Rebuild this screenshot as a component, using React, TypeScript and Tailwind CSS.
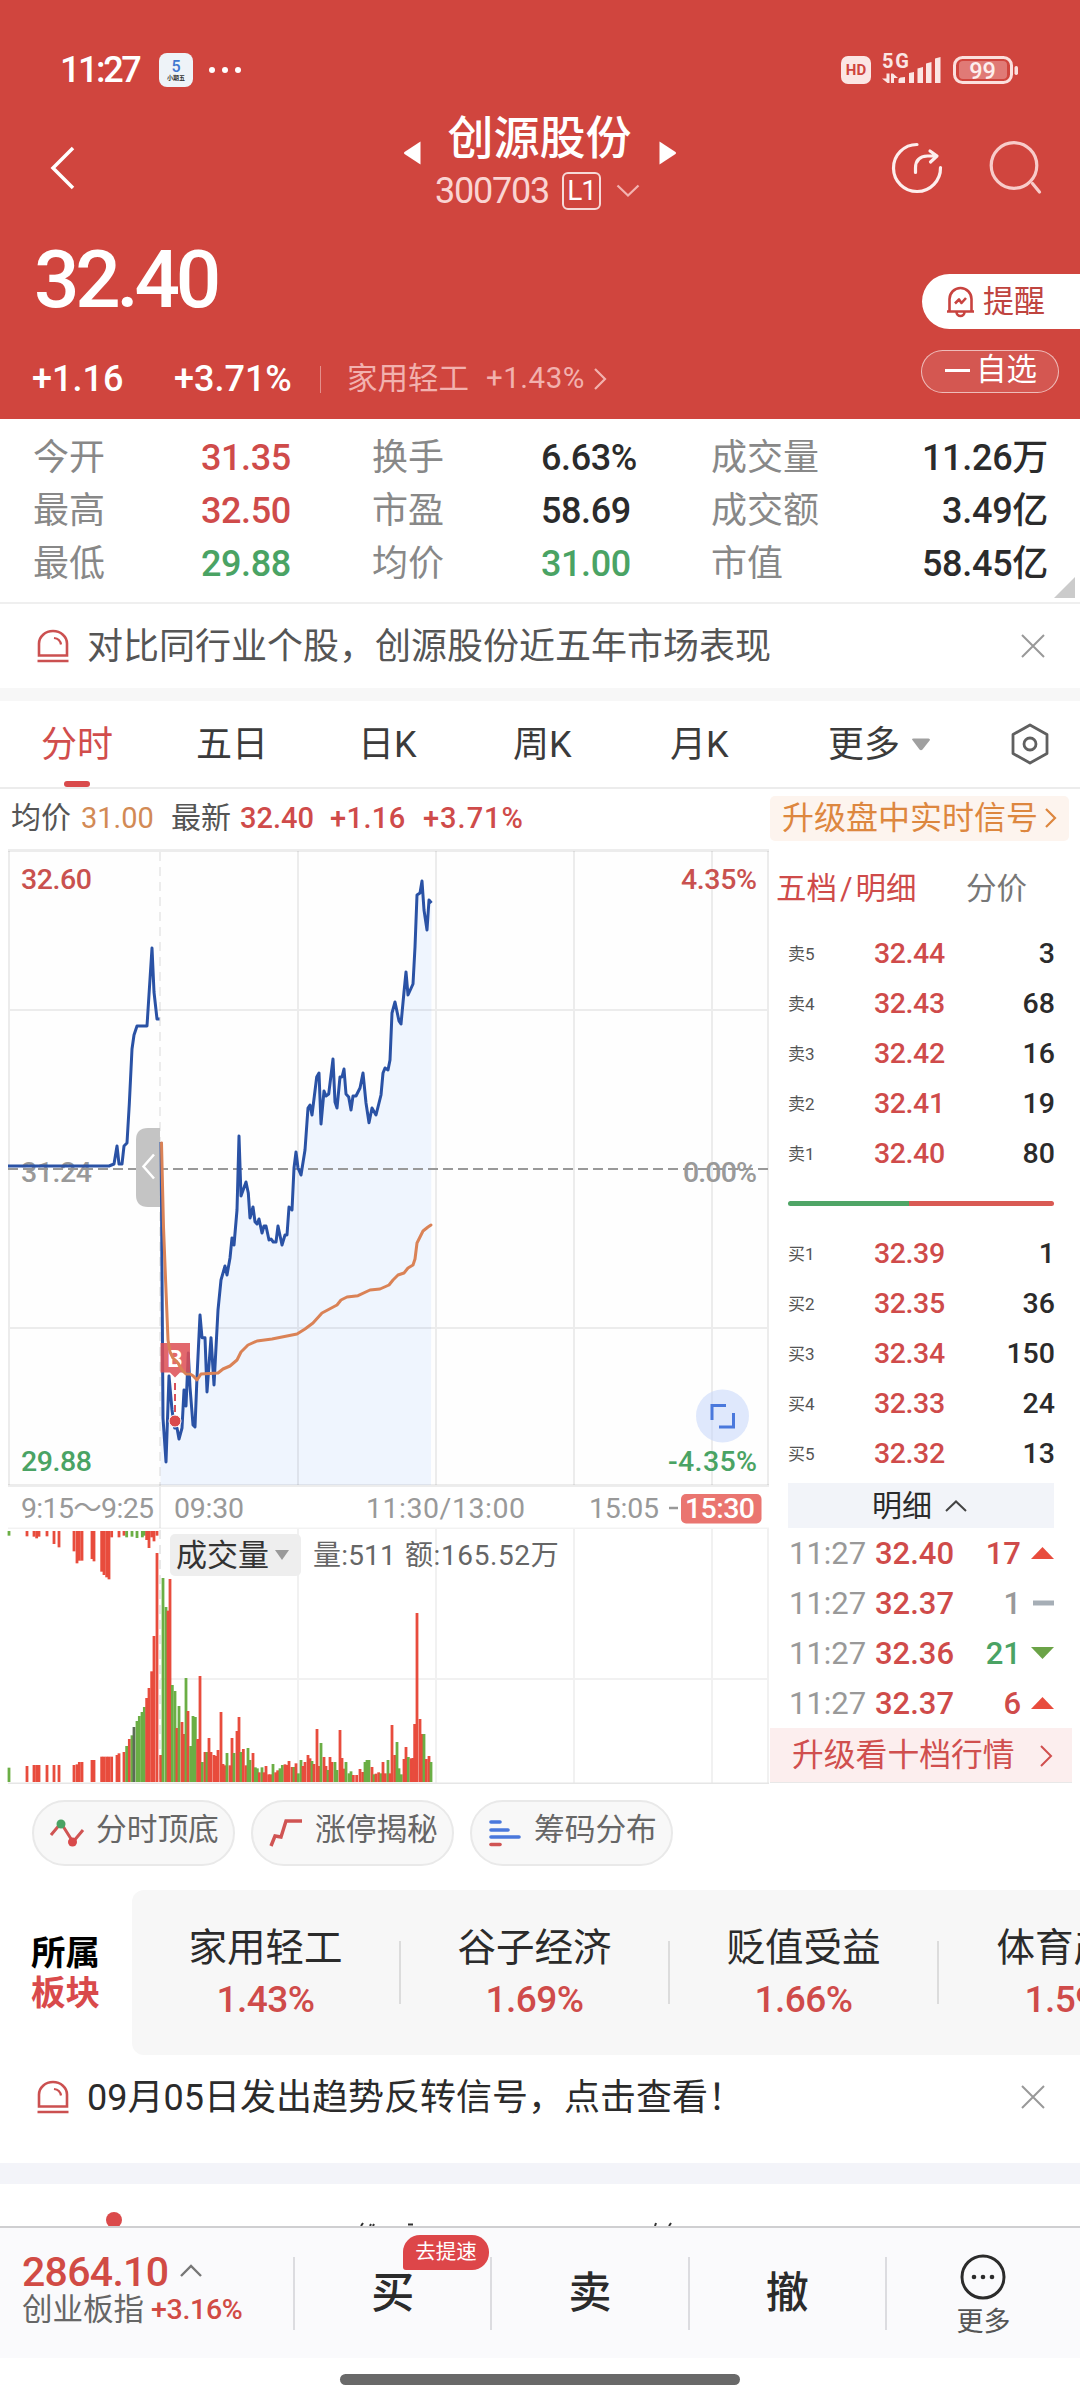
import type { ReactNode } from 'react';

type Tone = 'up' | 'down' | 'flat';

const toneClass: Record<Tone, string> = {
  up: 'text-[#cf4b4a]',
  down: 'text-[#4aa364]',
  flat: 'text-[#999999]',
};

const stats: { label: string; value: string; color: string }[][] = [
  [
    { label: '今开', value: '31.35', color: 'text-[#cf4b4a]' },
    { label: '换手', value: '6.63%', color: 'text-[#2b2b2b]' },
    { label: '成交量', value: '11.26万', color: 'text-[#2b2b2b]' },
  ],
  [
    { label: '最高', value: '32.50', color: 'text-[#cf4b4a]' },
    { label: '市盈', value: '58.69', color: 'text-[#2b2b2b]' },
    { label: '成交额', value: '3.49亿', color: 'text-[#2b2b2b]' },
  ],
  [
    { label: '最低', value: '29.88', color: 'text-[#4aa364]' },
    { label: '均价', value: '31.00', color: 'text-[#4aa364]' },
    { label: '市值', value: '58.45亿', color: 'text-[#2b2b2b]' },
  ],
];

const asks = [
  ['卖5', '32.44', '3'],
  ['卖4', '32.43', '68'],
  ['卖3', '32.42', '16'],
  ['卖2', '32.41', '19'],
  ['卖1', '32.40', '80'],
];

const bids = [
  ['买1', '32.39', '1'],
  ['买2', '32.35', '36'],
  ['买3', '32.34', '150'],
  ['买4', '32.33', '24'],
  ['买5', '32.32', '13'],
];

const ticks: { price: string; volume: string; tone: Tone }[] = [
  { price: '32.40', volume: '17', tone: 'up' },
  { price: '32.37', volume: '1', tone: 'flat' },
  { price: '32.36', volume: '21', tone: 'down' },
  { price: '32.37', volume: '6', tone: 'up' },
];

const sectors = [
  ['家用轻工', '1.43%'],
  ['谷子经济', '1.69%'],
  ['贬值受益', '1.66%'],
  ['体育产业', '1.59%'],
];

const preOpenLine =
  '8,1166 109,1166 114,1164 117,1146 119,1164 122,1164 124,1146 127,1143 129.3,1104 132,1049 134,1035 137,1026 147,1026 149.3,990 152,948 154,992 157,1019 159.5,1019';

const priceLine =
  '161,1142 161.5,1200 163,1418 166,1462 169,1376 172,1410 174.7,1428 177,1428 179,1439 182,1428 184,1390 186,1406 188.3,1353 190,1387 193,1425 195,1427 197,1377 200,1315 202,1337.7 205,1337.7 207,1392 211,1337.7 214,1385 218,1310 221,1280 225,1266 227,1275 230,1258 232,1238 234,1245 237,1210 239,1136 241,1196 246,1182 248.3,1193 250,1218 253,1207 255,1221.7 257,1224 259,1219 262,1233 264,1226 266,1226 269,1240 271,1239 273.3,1242 276,1242 278,1226 282,1245 285,1235 287,1235 289,1207 292,1210 294,1168 296,1152 298,1168 301,1175 305,1150 308,1108 310,1105 312,1115 316.7,1077 319,1073 321,1124 324,1091 326,1096 328.7,1094 333,1059 335,1102 337,1108 340,1077 342,1077 344,1069 346,1094 348.7,1097 351,1110 353,1096 356,1096 360,1088 363,1073 366,1103 369,1122.7 372,1108 376,1115 381,1095 383,1073 385,1068 388,1070 390,1060 392,1013 395,1002 399,1021 401,1024 404,992 406,972 408,995 413,984 415,947 417,895 420,893 422,881 424,910 427,930 429,900 431.5,903';

const averageLine =
  '161.5,1143 163.5,1227 165.7,1283 168,1340 170,1352 173,1358 178,1363 182,1370 186,1374 190,1374 193,1375.7 197,1380 201,1374 218,1373 223,1369 230,1366 237,1360 241,1352 248,1345 257,1341 272,1339 297,1334 305,1329 313,1323 322,1313 337,1305 341,1300 347,1297 358,1295.7 370,1290 380,1289 389,1285 393,1280 398,1275 404,1273 408,1268 413,1265 415,1259 417,1243 423,1231 428,1227 431,1225';

// x (in thirds of a pixel), height, colour: r rise, g fall, k unchanged
const auctionBars =
  '27,14,g 81,16,r 102,17,r 110,22,r 117,17,r 141,16,r 162,39,r 177,49,r 222,61,r 231,97,r 238,89,r 246,89,r 276,84,r 282,91,r 305,122,r 312,132,r 320,139,r 327,145,r 335,19,r 357,19,r 372,14,r 380,19,g 396,17,g 411,21,g 427,19,g 433,14,g 440,27,r 447,51,r 455,19,r 462,31,r 471,14,r';

const volumeBars =
  '27,773,g 81,768,r 102,765,r 110,765,r 117,765,r 141,765,r 162,765,r 177,765,r 222,765,r 231,763,r 238,756,r 246,756,r 276,750,r 282,750,r 305,740,r 312,740,r 320,740,r 327,740,r 335,740,r 351,735,r 357,730,r 372,726,r 380,708,g 388,687,r 396,676,g 402,651,k 411,633,g 418,618,g 426,606,g 433,591,g 440,564,r 447,534,r 455,484,r 462,378,r 471,129,r 482,735,r 489,204,g 498,291,g 504,302,r 510,207,r 517,525,g 525,543,g 531,654,r 537,588,g 546,636,r 552,672,r 558,504,g 564,603,r 572,708,g 579,618,g 586,621,g 593,687,r 600,498,r 607,756,g 615,726,r 621,726,g 627,684,r 633,726,r 642,735,r 648,738,r 654,720,r 663,606,r 669,762,r 675,766,r 681,729,g 690,766,r 696,684,r 702,729,g 711,663,r 717,621,r 723,726,g 730,717,r 738,766,r 744,714,g 750,750,g 759,729,r 766,772,g 772,775,g 778,787,r 786,772,g 792,787,r 798,768,r 806,793,r 812,793,r 819,762,g 827,787,r 833,781,r 840,775,g 847,765,g 855,763,r 861,765,r 867,753,r 876,771,r 882,771,g 888,760,r 895,790,g 903,750,g 909,768,r 915,756,r 924,735,r 930,745,r 936,753,g 942,762,r 951,657,r 957,768,r 963,699,g 972,741,r 978,768,r 984,780,g 990,741,r 996,756,r 1005,756,g 1011,780,g 1020,660,r 1026,744,r 1032,776,r 1038,756,g 1047,790,g 1053,784,g 1060,795,r 1070,795,r 1080,777,r 1088,786,r 1095,756,g 1101,750,g 1107,750,g 1116,771,r 1122,793,g 1128,791,r 1136,787,r 1143,790,g 1149,756,r 1156,790,r 1164,750,g 1170,790,r 1176,645,r 1184,735,r 1191,696,g 1197,775,g 1204,793,g 1212,747,r 1218,711,r 1225,741,g 1233,745,r 1239,744,r 1244,642,r 1251,309,r 1260,627,r 1266,672,r 1272,672,g 1279,747,r 1287,738,r 1293,756,g';

const barColor: Record<string, string> = { r: '#e84c3d', g: '#6bae45', k: '#5d6b57' };

const parseBars = (source: string) =>
  source.split(' ').map((item) => {
    const [x, y, kind] = item.split(',');
    return { x: Number(x) / 3, y: Number(y), color: barColor[kind] };
  });

const StatusBar = () => (
  <div className="flex h-[100px] items-center pt-[40px] pl-[60px] text-white">
    <span className="w-[99px] text-[36px] font-medium tracking-[-2.4px]">11:27</span>
    <div className="flex h-[34px] w-[34px] flex-col items-center rounded-[8px] bg-[#eef3f8] pt-[6px]">
      <span className="text-[16px] font-medium text-[#3f78d0]">5</span>
      <span className="text-[6px] font-bold text-[#333]">小期五</span>
    </div>
    <div className="ml-[16px] flex gap-[7px]">
      <i className="h-[6px] w-[6px] rounded-full bg-white" />
      <i className="h-[6px] w-[6px] rounded-full bg-white" />
      <i className="h-[6px] w-[6px] rounded-full bg-white" />
    </div>
    <div className="ml-auto flex items-center pr-[61px]">
      <span className="flex h-[28px] w-[30px] items-center justify-center rounded-[7px] bg-[#fbe6e4] text-[15px] font-bold text-[#cf453e]">HD</span>
      <svg className="ml-[11px] overflow-visible" width="60" height="34" viewBox="0 0 60 34" fill="#fbe6e4">
        <text x="0" y="15" fontSize="20" fontWeight="700" textLength="27">5G</text>
        <path d="M4.500 20.500h3V30h-2L0 25.500h4.500zM9 20.500h2l5 4.500h-4v5H9zM16.500 30v-3q0-2 2-2.500l4.500-.5v6zM27 20l5-1v11h-5zM35.500 15.500l5.500-1.500v16h-5.500zM44 10.500L49.500 9v21H44zM53 5.500L58.500 4v26H53z" />
      </svg>
      <svg className="ml-[11px]" width="66" height="28" viewBox="0 0 66 28">
        <rect x="1.500" y="1.500" width="57" height="25" rx="8" fill="none" stroke="#fbe0de" strokeWidth="3" />
        <rect x="6" y="5" width="48" height="18" rx="4" fill="#e07a76" />
        <rect x="61.500" y="10" width="3.500" height="9" rx="1.700" fill="#fbe0de" />
        <text x="29.500" y="22.500" fontSize="23.500" fontWeight="500" fill="#fdeeed" textAnchor="middle">99</text>
      </svg>
    </div>
  </div>
);

const TitleBar = () => (
  <div className="flex h-[120px] text-white">
    <svg className="mt-[45px] ml-[49px]" width="28" height="46" viewBox="0 0 28 46">
      <path d="M24 3L4 23l20 20" fill="none" stroke="#fff" strokeWidth="3.500" />
    </svg>
    <svg className="mt-[41px] ml-[327px]" width="17" height="24" viewBox="0 0 17 24">
      <path d="M16.500 .5v23L.5 13q-1-1 0-2z" fill="#fff" />
    </svg>
    <div className="ml-[13px] flex w-[224px] flex-col items-center pt-[15px] pr-[13px]">
      <h1 className="text-[46px] font-medium">创源股份</h1>
      <div className="mt-[11px] -ml-[4px] flex items-center">
        <span className="text-[36px] tracking-[-1.2px] text-[#fad4d2]">300703</span>
        <span className="ml-[13px] flex h-[38px] w-[39px] items-center justify-center rounded-[6px] border-2 border-white/80 text-[28px] tracking-[-1px]">L1</span>
        <svg className="ml-[15px]" width="24" height="14" viewBox="0 0 24 14">
          <path d="M1.500 1.500l10.500 10 10.500-10" fill="none" stroke="#f3b3b0" strokeWidth="2.200" />
        </svg>
      </div>
    </div>
    <svg className="mt-[41px] ml-[1px]" width="17" height="24" viewBox="0 0 17 24">
      <path d="M.5 .5v23L16.500 13q1-1 0-2z" fill="#fff" />
    </svg>
    <svg className="mt-[40px] ml-[213px]" width="56" height="56" viewBox="0 0 56 56" fill="none" stroke="#fdeeed" strokeWidth="3.200" strokeLinecap="round" strokeLinejoin="round">
      <path d="M28 4.500A23.500 23.500 0 1 0 51.500 27.500" />
      <path d="M26.500 32.500v-4.500q0-11.500 12-12h8.500M41 11l7 5-6.500 6" />
    </svg>
    <svg className="mt-[39px] ml-[44px]" width="56" height="58" viewBox="0 0 56 58" fill="none" stroke="#f8ccca" strokeWidth="3.200" strokeLinecap="round">
      <circle cx="25" cy="26.500" r="22.800" />
      <path d="M43.500 44.500l7 8.500" />
    </svg>
  </div>
);

const Quote = () => (
  <div className="flex h-[199px] justify-between pl-[32px] text-white">
    <div className="pt-[20px]">
      <p className="pl-[2px] text-[80px] font-medium tracking-[-4.2px]">32.40</p>
      <div className="mt-[41px] flex items-center text-[36px] font-medium">
        <span className="w-[142px]">+1.16</span>
        <span className="w-[146px]">+3.71%</span>
        <i className="h-[27px] w-px bg-white/40" />
        <span className="ml-[26px] text-[30.500px] font-normal text-[#f2b1ae]">家用轻工</span>
        <span className="ml-[17px] text-[29.500px] font-normal tracking-[0.5px] text-[#f2b1ae]">+1.43%</span>
        <svg className="ml-[8px]" width="14" height="22" viewBox="0 0 14 22">
          <path d="M2 1l10 10L2 21" fill="none" stroke="#f2b1ae" strokeWidth="2.200" />
        </svg>
      </div>
    </div>
    <div className="flex flex-col items-end pt-[54px]">
      <div className="flex h-[55px] w-[158px] items-center rounded-l-full bg-white pl-[24px] text-[31px] text-[#bf443f]">
        <svg className="mr-[8px]" width="29" height="33" viewBox="0 0 29 33" fill="none" stroke="#c8433f" strokeWidth="2.600" strokeLinejoin="round">
          <path d="M3.500 26V14a11 11 0 0 1 22 0v12M1 26.500h27M10.500 27a4 4 0 0 0 8 0" />
          <path d="M9 18.500l4-4 2.500 3.500 4.500-5" />
        </svg>
        提醒
      </div>
      <div className="mt-[21px] mr-[21px] flex h-[43px] w-[138px] items-center rounded-full border border-white/60 bg-white/10 pb-[2px] pl-[23px] text-[30.500px]">
        <i className="mr-[6px] h-[3px] w-[25px] bg-white" />
        自选
      </div>
    </div>
  </div>
);

const Stats = () => (
  <section className="relative h-[185px] border-b-2 border-[#efefef] pt-[12px]">
    {stats.map((row) => (
      <div key={row[0].label} className="grid h-[53px] grid-cols-[168px_171px_169px_170px_130px_1fr] items-center pr-[32px] pl-[33px] text-[36px]">
        {row.map((cell, index) => (
          <div key={cell.label} className="contents">
            <span className="text-[#888888]">{cell.label}</span>
            <span className={`font-medium ${cell.color} ${index === 2 ? 'text-right tracking-[-0.3px]' : 'tracking-[-0.4px]'}`}>{cell.value}</span>
          </div>
        ))}
      </div>
    ))}
    <svg className="absolute right-[5px] bottom-[4px]" width="21" height="21" viewBox="0 0 21 21">
      <path d="M21 0v21H0z" fill="#cbcbcb" />
    </svg>
  </section>
);

const Notice = ({ children, className }: { children: ReactNode; className: string }) => (
  <div className={`flex items-center pr-[34px] pl-[36px] text-[36px] ${className}`}>
    <svg width="34" height="34" viewBox="0 0 34 34" fill="none" stroke="#cb5050" strokeWidth="2.600">
      <path d="M3 26.500V14.500a14 12.500 0 0 1 28 0v12zM1.500 32h31" />
      <path d="M18 9c4 .5 6.500 3 7 6.500" strokeWidth="2.200" />
    </svg>
    <span className="mt-[2px] ml-[17px] whitespace-nowrap">{children}</span>
    <svg className="ml-auto" width="26" height="26" viewBox="0 0 26 26">
      <path d="M2 2l22 22M24 2L2 24" stroke="#999" strokeWidth="2" />
    </svg>
  </div>
);

const Periods = () => (
  <nav className="flex h-[88px] items-center border-b-2 border-[#ececec] pl-[41px] text-[36px] text-[#3b3b3b]">
    <span className="relative flex h-full w-[155px] items-center pt-[1px] text-[#d14d4c]">
      分时
      <i className="absolute bottom-0 left-[23px] h-[6px] w-[26px] rounded-[3px] bg-[#d94a4b]" />
    </span>
    <span className="w-[162px] pt-[1px]">五日</span>
    <span className="w-[155px] pt-[1px]">日K</span>
    <span className="w-[157px] pt-[1px]">周K</span>
    <span className="w-[158px] pt-[1px]">月K</span>
    <span className="pt-[1px]">更多</span>
    <svg className="ml-[11px]" width="20" height="13" viewBox="0 0 20 13">
      <path d="M1 1.500q0-1 1.500-1h15q1.500 0 1.500 1.500L11.500 11.500q-1.500 1.500-3 0z" fill="#a0a0a0" />
    </svg>
    <svg className="ml-[79px]" width="40" height="42" viewBox="0 0 40 42" fill="none" stroke="#606060" strokeWidth="2.800" strokeLinejoin="round">
      <path d="M20 2l17 9.500v19L20 40 3 30.500v-19z" />
      <circle cx="20" cy="21" r="6" />
    </svg>
  </nav>
);

const Legend = () => (
  <div className="flex h-[60px] items-center pr-[11px] pb-[2px] pl-[11px] text-[29px] text-[#555]">
    <span className="text-[30px]">均价</span>
    <span className="ml-[10px] w-[90px] text-[#d28a55]">31.00</span>
    <span className="text-[30px]">最新</span>
    <span className="ml-[9px] w-[90px] font-medium text-[#cf4b4a]">32.40</span>
    <span className="w-[93px] font-medium tracking-[0.4px] text-[#cf4b4a]">+1.16</span>
    <span className="font-medium tracking-[1px] text-[#cf4b4a]">+3.71%</span>
    <span className="ml-auto flex h-[45px] w-[299px] items-center rounded-[5px] bg-[#fdf4ee] pl-[12px] text-[32px] text-[#dd873f]">
      升级盘中实时信号
      <svg className="ml-[6px]" width="13" height="20" viewBox="0 0 13 20">
        <path d="M2 1l9 9-9 9" fill="none" stroke="#dd873f" strokeWidth="2.200" />
      </svg>
    </span>
  </div>
);

const PriceChart = () => (
  <svg className="block" width="769" height="680" viewBox="0 849 769 680" fontSize="28.500">
    <rect x="8" y="850" width="761" height="636" fill="#fefefe" />
    <polygon points={`160.500,1485 ${priceLine} 431,1485`} fill="#eff5fe" />
    <g stroke="#000" strokeOpacity=".07" strokeWidth="2">
      <path d="M9 851v634M298 851v634M436 851v634M574 851v634M712 851v634M768 851v634M9 1010h760M9 1328h760M160 1487v41" fill="none" />
      <path d="M8 850.500h761M8 1485.500h761" strokeWidth="3" />
      <path d="M160 852v634" strokeDasharray="9 6" />
      <path d="M8 1528.500h761" strokeOpacity=".05" />
    </g>
    <path d="M8 1169h761" stroke="#999" strokeWidth="2" strokeDasharray="10 5" />
    <g fontWeight="500">
      <text x="21" y="889" fill="#c9514f" textLength="71">32.60</text>
      <text x="21" y="1182" fill="#999" textLength="71">31.24</text>
      <text x="21" y="1471" fill="#4aa364" textLength="71">29.88</text>
      <text x="681" y="889" fill="#c9514f" textLength="76">4.35%</text>
      <text x="683" y="1182" fill="#999" textLength="74">0.00%</text>
      <text x="668" y="1471" fill="#4aa364" textLength="89">-4.35%</text>
    </g>
    <g fill="#999">
      <text x="21" y="1517.500" textLength="133">9:15～9:25</text>
      <text x="174" y="1517.500" textLength="70">09:30</text>
      <text x="366" y="1517.500" textLength="159">11:30/13:00</text>
      <text x="589" y="1517.500" textLength="70">15:05</text>
      <path d="M669 1508h9" stroke="#999" strokeWidth="2.500" />
    </g>
    <rect x="681" y="1494" width="80.500" height="29.500" rx="5" fill="#ea7570" />
    <text x="685" y="1517.500" fill="#fff" fontWeight="500" textLength="70">15:30</text>

    <path d="M160 1128v79h-12q-12 0-12-12v-55q0-12 12-12z" fill="#c4c4c4" />
    <path d="M154 1154.500l-10.500 12 10.500 12" fill="none" stroke="#fff" strokeWidth="2.500" />

    <g fill="none" stroke="#2a52a5" strokeWidth="3" strokeLinejoin="round">
      <polyline points={preOpenLine} />
      <polyline points={priceLine} />
    </g>

    <path d="M160.500 1343h29.500v29.500h-10l-5 5-5-5h-9.500z" fill="#dd4f55" fillOpacity=".86" />
    <text x="175" y="1366.500" fontSize="24" fontWeight="700" fill="#fff" textAnchor="middle">B</text>
    <path d="M175 1383v32" stroke="#d9505a" strokeWidth="2" strokeDasharray="7 4" />
    <circle cx="175" cy="1421" r="6" fill="#db4a4b" stroke="#fff" strokeWidth="1" />
    <polyline points={averageLine} fill="none" stroke="#da8256" strokeWidth="3" strokeLinejoin="round" strokeLinecap="round" />

    <circle cx="722.500" cy="1416" r="26.500" fill="#c9d8fa" fillOpacity=".6" />
    <path d="M712 1420v-14.500h14M733.500 1413v14h-14.500" fill="none" stroke="#4a78dc" strokeWidth="3" />
  </svg>
);

const VolumeChart = () => (
  <div className="relative">
    <svg className="block" width="769" height="255" viewBox="0 1529 769 255">
      <path d="M160 1530v253" stroke="#e8e8e8" strokeWidth="2" strokeDasharray="9 6" />
      <path d="M298 1529v254M436 1529v254M574 1529v254M712 1529v254M768 1529v254M160 1679h609" stroke="#f1f1f1" strokeWidth="2" />
      {parseBars(auctionBars).map((bar) => (
        <rect key={bar.x} x={bar.x - 1.4} y="1531" width="2.800" height={bar.y / 3} fill={bar.color} />
      ))}
      {parseBars(volumeBars).map((bar) => (
        <rect key={bar.x} x={bar.x - 1.4} y={1510 + bar.y / 3} width="2.800" height={272 - bar.y / 3} fill={bar.color} />
      ))}
      <path d="M8 1783.200h761" stroke="#e6e6e6" strokeWidth="1.500" />
    </svg>
    <div className="absolute top-[5px] left-[170px] flex items-center">
      <span className="flex h-[42px] w-[131px] items-center rounded-[5px] bg-[#eeeeee] pl-[6px] text-[31px] text-[#333]">
        成交量
        <svg className="ml-[6px]" width="14" height="10" viewBox="0 0 14 10">
          <path d="M0 0h14L7 10z" fill="#999" />
        </svg>
      </span>
      <span className="mt-[2px] ml-[12px] text-[28px] tracking-[0.2px] text-[#666]">量:511</span>
      <span className="mt-[2px] ml-[9px] text-[28px] tracking-[0.6px] text-[#666]">额:165.52万</span>
    </div>
  </div>
);

const LevelRow = ({ level }: { level: string[] }) => (
  <div className="flex h-[50px] items-center pt-px pr-[17px] pl-[19px] text-[28.500px] font-medium">
    <span className="w-[86px] text-[17px] font-normal text-[#555]">{level[0]}</span>
    <span className="tracking-[-0.4px] text-[#cf4b4a]">{level[1]}</span>
    <span className="ml-auto text-[#2b2b2b]">{level[2]}</span>
  </div>
);

const TickMark = ({ tone }: { tone: Tone }) => (
  <svg className="ml-[10px]" width="23" height="12" viewBox="0 0 23 12">
    {tone === 'up' && <path d="M0 12L11.500 0 23 12z" fill="#e84c3d" />}
    {tone === 'down' && <path d="M0 0h23L11.500 12z" fill="#6ba347" />}
    {tone === 'flat' && <path d="M2 3.500h21v5H2z" fill="#a6aeb6" />}
  </svg>
);

const OrderBook = () => (
  <aside className="w-[303px]">
    <div className="flex h-[80px] items-center pl-[7px] text-[30.500px] text-[#cf4b4a]">
      <span className="w-[190px]">五档<span className="mx-[3px]">/</span>明细</span>
      <span className="text-[#777]">分价</span>
    </div>
    {asks.map((level) => (
      <LevelRow key={level[0]} level={level} />
    ))}
    <div className="flex h-[50px] items-center pr-[18px] pb-[2px] pl-[19px]">
      <i className="h-[5px] w-[121px] rounded-l-full bg-[#4fa566]" />
      <i className="h-[5px] flex-1 rounded-r-full bg-[#d95a54]" />
    </div>
    {bids.map((level) => (
      <LevelRow key={level[0]} level={level} />
    ))}
    <div className="mt-[4px] mr-[18px] ml-[19px] flex h-[45px] items-center justify-center gap-[13px] bg-[#f2f4f9] pr-[3px] text-[30px] text-[#2b2b2b]">
      明细
      <svg width="22" height="12" viewBox="0 0 22 12">
        <path d="M1 11L11 1.500 21 11" fill="none" stroke="#444" strokeWidth="2" />
      </svg>
    </div>
    {ticks.map((tick, index) => (
      <div key={index} className="flex h-[50px] items-center pr-[18px] pl-[20px] text-[31px]">
        <span className="w-[86px] text-[#999]">11:27</span>
        <span className="font-medium text-[#cf4b4a]">{tick.price}</span>
        <span className={`ml-auto font-medium ${toneClass[tick.tone]}`}>{tick.volume}</span>
        <TickMark tone={tick.tone} />
      </div>
    ))}
    <div className="ml-px flex h-[55px] items-center justify-between border-b border-[#e8e8e8] bg-[#fceeee] pt-px pr-[19px] pl-[22px] text-[31.800px] text-[#d04f4e]">
      升级看十档行情
      <svg width="14" height="22" viewBox="0 0 14 22">
        <path d="M2 1l10 10L2 21" fill="none" stroke="#d04f4e" strokeWidth="2" />
      </svg>
    </div>
  </aside>
);

const Chip = ({ icon, label }: { icon: ReactNode; label: string }) => (
  <span className="flex h-[66px] w-[203px] items-center gap-[11px] rounded-full border-2 border-[#e9e9e9] bg-[#f8f8f8] pb-[6px] pl-[15px] text-[30.700px] whitespace-nowrap text-[#666]">
    {icon}
    {label}
  </span>
);

const Chips = () => (
  <div className="flex gap-[16px] pt-[16px] pl-[32px]">
    <Chip
      label="分时顶底"
      icon={
        <svg className="mt-[5px] shrink-0" width="36" height="30" viewBox="0 0 36 30" fill="none" strokeWidth="3">
          <path d="M2 17L12 5l12 19 10-12" stroke="#d05453" />
          <circle cx="12" cy="6" r="4.500" fill="#4aa364" />
          <circle cx="23.500" cy="24" r="4.500" fill="#d94a4b" />
        </svg>
      }
    />
    <Chip
      label="涨停揭秘"
      icon={
        <svg className="mt-[5px] shrink-0" width="36" height="30" viewBox="0 0 36 30">
          <path d="M3 28l4-10 6 1 5-16h16" fill="none" stroke="#d05453" strokeWidth="3.400" />
        </svg>
      }
    />
    <Chip
      label="筹码分布"
      icon={
        <svg className="mt-[5px] shrink-0" width="36" height="30" viewBox="0 0 36 30" strokeWidth="3.600" strokeLinecap="round">
          <path d="M4 4h9M4 12h17M4 19h28" stroke="#4a78dc" />
          <path d="M4 26.500h9" stroke="#d05453" />
        </svg>
      }
    />
  </div>
);

const Sectors = () => (
  <section className="mt-[24px] flex items-center overflow-hidden">
    <div className="w-[132px] shrink-0 pt-[2px] pl-[31px] text-[34.500px] font-bold">
      <p className="h-[40px] text-black">所属</p>
      <p className="h-[36px] text-[#d94a4b]">板块</p>
    </div>
    <div className="flex h-[165px] shrink-0 items-center rounded-l-[12px] bg-[#f7f7f7]">
      {sectors.map(([name, change], index) => (
        <div key={name} className={`flex h-[63px] w-[269px] flex-col items-center justify-center gap-[13px] pt-[2px] ${index < 3 ? 'border-r-2 border-[#dcdcdc]' : ''}`}>
          <span className="text-[38.500px] text-[#2b2b2b]">{name}</span>
          <span className="text-[37px] font-medium tracking-[-0.5px] text-[#cf4b4a]">{change}</span>
        </div>
      ))}
    </div>
  </section>
);

// tops of the next section's tabs, cut off by the trade bar
const NextTabs = () => (
  <div className="h-[42px]">
    <svg className="block" width="1080" height="42" viewBox="0 0 1080 42">
      <circle cx="114" cy="36" r="8" fill="#db4a4b" />
      <path d="M361 42l2-3M370 42l1-2M373 42l1-2M408 40.500h5M655 42l1-3M669 42l2-3" stroke="#333" strokeWidth="2" />
    </svg>
  </div>
);

const TradeBar = () => (
  <footer className="flex h-[132px] items-center border-t-2 border-[#cfcfd1] bg-[#fafafc] text-[#2b2b2b]">
    <div className="w-[293px] shrink-0 pb-[9px] pl-[22px]">
      <div className="flex items-center">
        <span className="text-[41px] font-medium tracking-[-0.7px] text-[#d14b45]">2864.10</span>
        <svg className="mb-[4px] ml-[12px]" width="22" height="13" viewBox="0 0 22 13">
          <path d="M1 12L11 2l10 10" fill="none" stroke="#777" strokeWidth="2.400" />
        </svg>
      </div>
      <div className="mt-[2px] flex items-center text-[30.500px] text-[#666]">
        创业板指
        <span className="ml-[7px] text-[28.500px] font-medium tracking-[-0.3px] text-[#d14b45]">+3.16%</span>
      </div>
    </div>
    {['买', '卖', '撤'].map((action) => (
      <button key={action} type="button" className="relative h-[73px] w-[197.300px] shrink-0 border-l-2 border-[#dcdce0] text-[43px] font-medium">
        {action}
        {action === '买' && (
          <span className="absolute -top-[22px] left-[108px] flex h-[35px] w-[86px] items-center justify-center rounded-[17px] rounded-bl-[3px] bg-[#dd4649] text-[20.500px] font-normal text-white">去提速</span>
        )}
      </button>
    ))}
    <div className="flex h-[73px] flex-1 flex-col items-center justify-center gap-[9px] border-l-2 border-[#dcdce0] pt-[3px] text-[27px] text-[#555]">
      <svg className="shrink-0" width="46" height="46" viewBox="0 0 46 46">
        <circle cx="23" cy="23" r="21" fill="none" stroke="#2b2b2b" strokeWidth="3" />
        <g fill="#2b2b2b">
          <circle cx="14" cy="23" r="2.300" />
          <circle cx="23" cy="23" r="2.300" />
          <circle cx="32" cy="23" r="2.300" />
        </g>
      </svg>
      <span>更多</span>
    </div>
  </footer>
);

export default function App() {
  return (
    <div className="h-[2400px] w-[1080px] overflow-hidden bg-white font-['Roboto','Noto_Sans_CJK_SC',sans-serif] leading-none">
      <header className="h-[419px] bg-[#d0453e]">
        <StatusBar />
        <TitleBar />
        <Quote />
      </header>
      <Stats />
      <Notice className="h-[84px] text-[#555]">对比同行业个股，创源股份近五年市场表现</Notice>
      <div className="h-[13px] bg-[#f7f7f7]" />
      <Periods />
      <Legend />
      <main className="flex">
        <div className="w-[769px]">
          <PriceChart />
          <VolumeChart />
        </div>
        <OrderBook />
      </main>
      <Chips />
      <Sectors />
      <Notice className="h-[108px] pb-[24px] text-[#2b2b2b]">09月05日发出趋势反转信号，点击查看！</Notice>
      <div className="h-[21px] bg-[#f3f4f9]" />
      <NextTabs />
      <TradeBar />
      <div className="mx-auto mt-[16px] h-[11px] w-[400px] rounded-full bg-[#696969]" />
    </div>
  );
}
